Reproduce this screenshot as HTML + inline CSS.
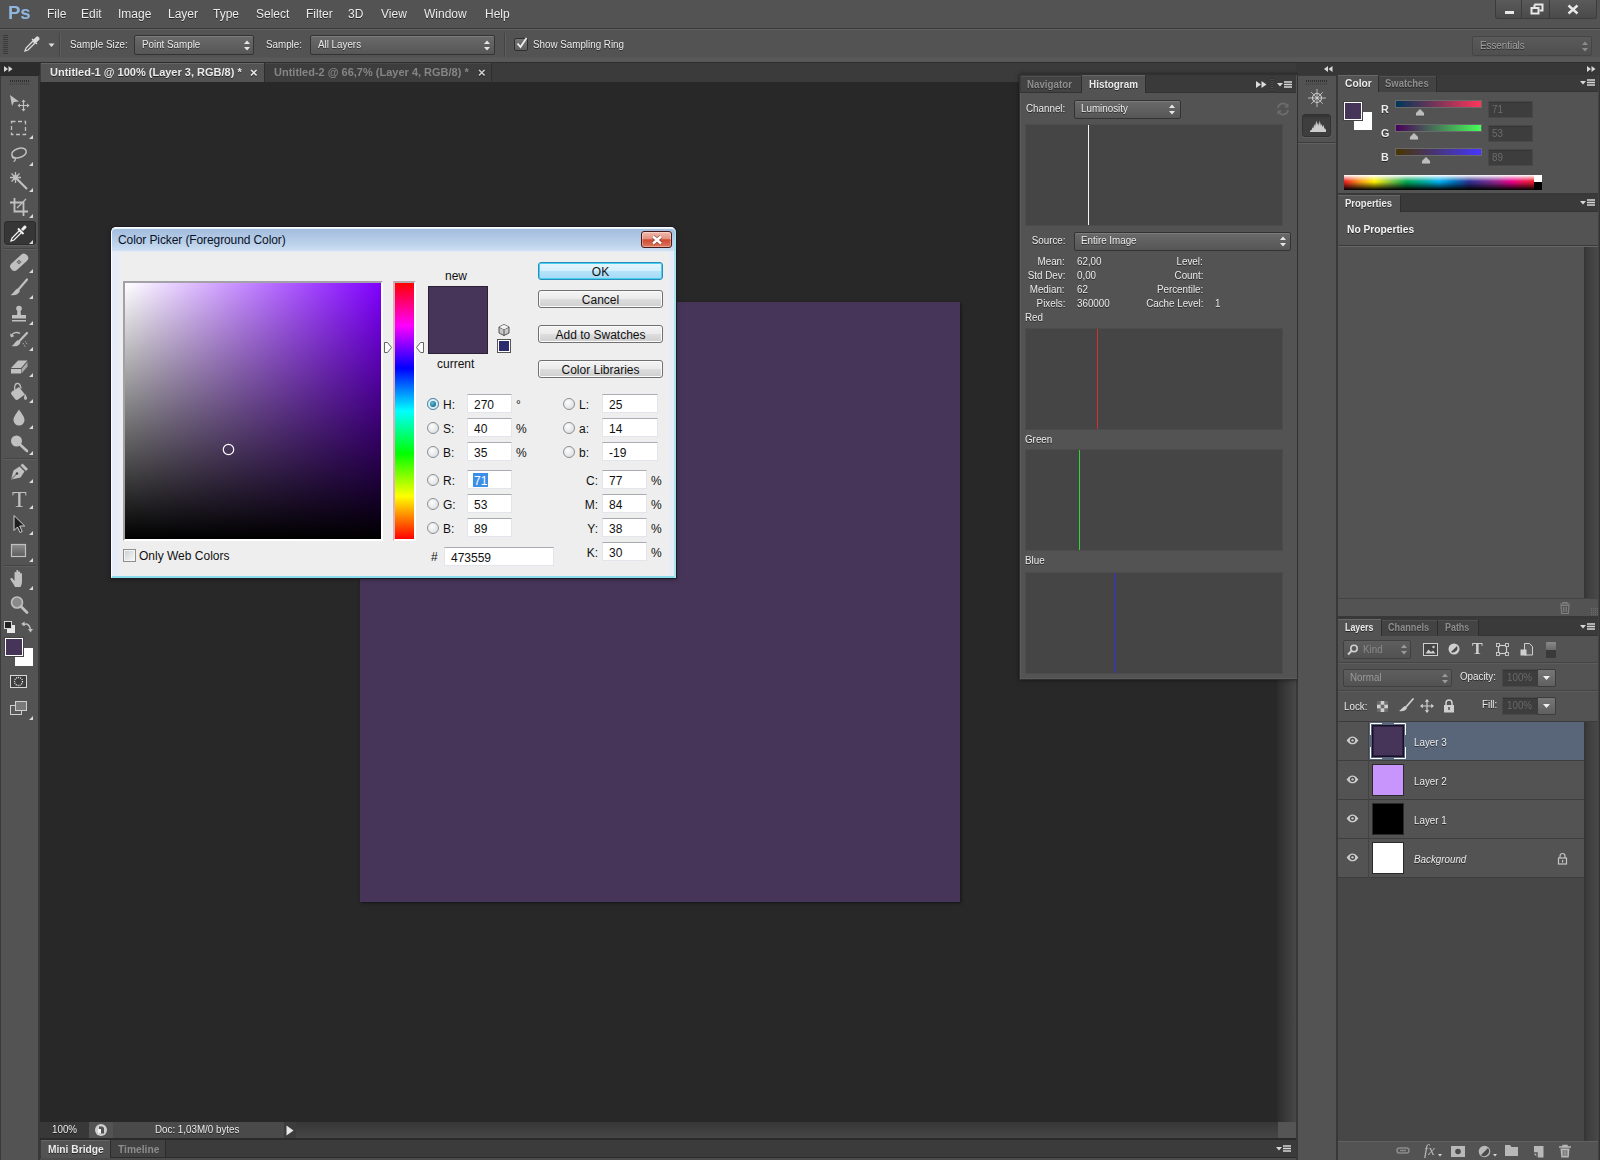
<!DOCTYPE html>
<html>
<head>
<meta charset="utf-8">
<title>Photoshop</title>
<style>
html,body{margin:0;padding:0;}
body{width:1600px;height:1160px;overflow:hidden;position:relative;background:#282828;font-family:"Liberation Sans","DejaVu Sans",sans-serif;font-size:11px;color:#ebebeb;}
.a{position:absolute;box-sizing:border-box;}
.t{position:absolute;white-space:nowrap;opacity:.999;font-size:10px;line-height:14px;text-shadow:0 1px 0 rgba(0,0,0,.55);transform:scaleX(.98);transform-origin:0 0;}
.w{transform:none;}
.b{font-weight:bold;transform:scaleX(1.023);}
.dt{font-weight:bold;transform:scaleX(1.1);}
.r{transform-origin:100% 0;text-align:right;}
.dim{color:#9a9a9a;}
svg{position:absolute;overflow:visible;}
.mb{top:7px;font-size:12px;color:#ececec;transform:none;}
.dd{background:linear-gradient(#6a6a6a,#565656);border:1px solid #333;border-radius:2px;box-shadow:inset 0 1px 0 rgba(255,255,255,.12);}
.hb{width:258px;height:102px;background:#454545;border:1px solid #4c4c4c;}
.tf{background:#3d3d3d;border:1px solid #484848;box-shadow:inset 0 1px 0 #353535;}
.dd2{background:linear-gradient(#5e5e5e,#525252);border:1px solid #404040;border-radius:2px;}
.sep{height:2px;background:#444;border-bottom:1px solid #5e5e5e;}
.d{position:absolute;white-space:nowrap;font-size:12px;line-height:14px;color:#111;}
/* SECTION-CSS */
</style>
</head>
<body>
<!-- MENUBAR -->
<div class="a" style="left:0;top:0;width:1600px;height:28px;background:#535353;"></div>
<div class="a" style="left:0;top:28px;width:1600px;height:1px;background:#3a3a3a;"></div>
<div class="t" style="left:8px;top:2px;font-size:19px;line-height:22px;font-weight:bold;color:#8fb6dd;letter-spacing:-0.3px;text-shadow:none;">Ps</div>
<div class="t mb" style="left:47px;">File</div>
<div class="t mb" style="left:81px;">Edit</div>
<div class="t mb" style="left:118px;">Image</div>
<div class="t mb" style="left:168px;">Layer</div>
<div class="t mb" style="left:213px;">Type</div>
<div class="t mb" style="left:256px;">Select</div>
<div class="t mb" style="left:306px;">Filter</div>
<div class="t mb" style="left:348px;">3D</div>
<div class="t mb" style="left:381px;">View</div>
<div class="t mb" style="left:424px;">Window</div>
<div class="t mb" style="left:485px;">Help</div>
<div class="a" style="left:1495px;top:0;width:102px;height:19px;background:linear-gradient(#5a5a5a,#4a4a4a);border:1px solid #3c3c3c;border-top:none;border-radius:0 0 3px 3px;"></div>
<div class="a" style="left:1521px;top:0;width:1px;height:18px;background:#3c3c3c;"></div>
<div class="a" style="left:1549px;top:0;width:1px;height:18px;background:#3c3c3c;"></div>
<div class="a" style="left:1505px;top:11px;width:9px;height:3px;background:#e8e8e8;"></div>
<svg style="left:1530px;top:3px;" width="14" height="12"><path d="M4.5 1.5h8v6h-3M4.5 1.5v2.5" fill="none" stroke="#e8e8e8" stroke-width="2"/><rect x="1.5" y="5" width="7" height="5.5" fill="none" stroke="#e8e8e8" stroke-width="2"/></svg>
<svg style="left:1567px;top:4px;" width="12" height="11"><path d="M1.5 1.5l9 8M10.5 1.5l-9 8" stroke="#e8e8e8" stroke-width="2.4" fill="none"/></svg>
<!-- OPTIONS -->
<div class="a" style="left:0;top:29px;width:1600px;height:33px;background:linear-gradient(#535353 0,#535353 27px,#5a5a5a 28px,#575757 33px);border-top:1px solid #626262;"></div>
<div class="a" style="left:0;top:62px;width:1600px;height:1px;background:#2e2e2e;"></div>
<div class="a" style="left:3px;top:35px;width:5px;height:20px;background:repeating-linear-gradient(#3a3a3a 0 1px,#535353 1px 2px);"></div>
<svg style="left:22px;top:34px;" width="20" height="20" viewBox="0 0 20 20"><path d="M3 17l1-3 7-7 2 2-7 7z" fill="none" stroke="#dcdcdc" stroke-width="1.3"/><path d="M10 5l5 5 M11.5 6.5l3-3.2c1-1 3.2 1.2 2.2 2.2l-3.2 3z" fill="#dcdcdc" stroke="#dcdcdc" stroke-width="1.2"/></svg>
<svg style="left:48px;top:43px;" width="8" height="5"><path d="M0.5 0.5h6l-3 3.5z" fill="#e0e0e0"/></svg>
<div class="a" style="left:59px;top:33px;width:1px;height:24px;background:#444;border-right:1px solid #5e5e5e;width:2px;"></div>
<div class="t" style="left:70px;top:38px;">Sample Size:</div>
<div class="a dd" style="left:134px;top:35px;width:120px;height:20px;"></div>
<div class="t" style="left:142px;top:38px;">Point Sample</div>
<svg style="left:243px;top:40px;" width="8" height="11"><path d="M1 4l3-3.5 3 3.5zM1 7l3 3.5 3-3.5z" fill="#e6e6e6"/></svg>
<div class="t" style="left:266px;top:38px;">Sample:</div>
<div class="a dd" style="left:310px;top:35px;width:185px;height:20px;"></div>
<div class="t" style="left:318px;top:38px;">All Layers</div>
<svg style="left:483px;top:40px;" width="8" height="11"><path d="M1 4l3-3.5 3 3.5zM1 7l3 3.5 3-3.5z" fill="#e6e6e6"/></svg>
<div class="a" style="left:504px;top:33px;width:2px;height:24px;background:#444;border-right:1px solid #5e5e5e;"></div>
<div class="a" style="left:514px;top:38px;width:14px;height:13px;background:linear-gradient(#747474,#606060);border:1px solid #2e2e2e;border-radius:2px;"></div>
<svg style="left:515px;top:36px;" width="14" height="14"><path d="M2.5 7.5l3 3.5 6-9" fill="none" stroke="#f0f0f0" stroke-width="1.8"/></svg>
<div class="t" style="left:533px;top:38px;">Show Sampling Ring</div>
<div class="a" style="left:1472px;top:36px;width:120px;height:20px;background:linear-gradient(#5a5a5a,#4f4f4f);border:1px solid #454545;border-radius:2px;"></div>
<div class="t dim" style="left:1480px;top:39px;color:#a0a0a0;">Essentials</div>
<svg style="left:1581px;top:41px;" width="8" height="11"><path d="M1 4l3-3.5 3 3.5zM1 7l3 3.5 3-3.5z" fill="#8c8c8c"/></svg>
<!-- TABS -->
<div class="a" style="left:0;top:63px;width:1600px;height:19px;background:#3b3b3b;"></div>
<div class="a" style="left:0;top:63px;width:40px;height:12px;background:#2c2c2c;"></div>
<svg style="left:4px;top:66px;" width="9" height="6"><path d="M0 0l4 3-4 3zM4.5 0l4 3-4 3z" fill="#d8d8d8"/></svg>
<div class="a" style="left:41px;top:63px;width:223px;height:19px;background:#535353;border-top:1px solid #666;"></div>
<div class="a" style="left:264px;top:63px;width:1px;height:19px;background:#2f2f2f;"></div>
<div class="a" style="left:265px;top:63px;width:226px;height:19px;background:#3d3d3d;border-top:1px solid #484848;"></div>
<div class="a" style="left:491px;top:63px;width:1px;height:19px;background:#2f2f2f;"></div>
<div class="a" style="left:40px;top:82px;width:224px;height:5px;background:#2e2e2e;"></div>
<div class="t dt" style="left:50px;top:66px;">Untitled-1 @ 100% (Layer 3, RGB/8) *</div>
<div class="t w" style="left:250px;top:65px;font-weight:bold;font-size:13px;line-height:16px;">×</div>
<div class="t dt" style="left:274px;top:66px;color:#858585;text-shadow:none;">Untitled-2 @ 66,7% (Layer 4, RGB/8) *</div>
<div class="t w" style="left:478px;top:65px;font-weight:bold;font-size:13px;line-height:16px;color:#d0d0d0;">×</div>
<!-- TOOLS -->
<div class="a" style="left:0;top:75px;width:40px;height:1085px;background:#535353;border-left:1px solid #3a3a3a;border-right:2px solid #383838;"></div>
<div class="a" style="left:0;top:75px;width:38px;height:1px;background:#2a2a2a;"></div>
<div class="a" style="left:10px;top:80px;width:20px;height:2px;background:repeating-linear-gradient(90deg,#2e2e2e 0 1px,#535353 1px 2px);"></div>
<div class="a" style="left:10px;top:83px;width:20px;height:2px;background:repeating-linear-gradient(90deg,#444 0 1px,#535353 1px 2px);"></div>
<div class="a" style="left:4px;top:221px;width:32px;height:24px;background:#363636;border-radius:3px;border:1px solid #2c2c2c;box-shadow:0 1px 0 #626262;"></div>
<div class="a" style="left:4px;top:248px;width:32px;height:1px;background:#444;border-bottom:1px solid #5e5e5e;height:2px;"></div>
<div class="a" style="left:4px;top:458px;width:32px;height:1px;background:#444;border-bottom:1px solid #5e5e5e;height:2px;"></div>
<div class="a" style="left:4px;top:565px;width:32px;height:1px;background:#444;border-bottom:1px solid #5e5e5e;height:2px;"></div>
<svg style="left:9px;top:93px;" width="20" height="20" viewBox="0 0 20 20"><path d="M1 2l9 6.5-5 .5-2 4z" fill="#c0c0c0"/><path d="M14.5 8v9M10 12.500h9" stroke="#c0c0c0" stroke-width="1.2" fill="none"/><path d="M14.5 6.500l2 2.500h-4zM14.5 18.500l2-2.500h-4zM8.5 12.500l2.500-2v4zM20.5 12.500l-2.500-2v4z" fill="#c0c0c0"/></svg>
<svg style="left:9px;top:118px;" width="20" height="20" viewBox="0 0 20 20"><rect x="2.5" y="3.5" width="14" height="13" fill="none" stroke="#c0c0c0" stroke-width="1.3" stroke-dasharray="4 2.5"/></svg>
<svg style="left:29px;top:135px;" width="4" height="4"><path d="M4 0v4h-4z" fill="#dadada"/></svg>
<svg style="left:9px;top:145px;" width="20" height="20" viewBox="0 0 20 20"><ellipse cx="10" cy="8" rx="7.5" ry="4.5" transform="rotate(-18 10 8)" fill="none" stroke="#c0c0c0" stroke-width="1.5"/><path d="M3.5 10.500c-1 2 1 3 2.5 2.5 1 1 0 3-1.5 3.5" fill="none" stroke="#c0c0c0" stroke-width="1.3"/></svg>
<svg style="left:29px;top:162px;" width="4" height="4"><path d="M4 0v4h-4z" fill="#dadada"/></svg>
<svg style="left:9px;top:171px;" width="20" height="20" viewBox="0 0 20 20"><path d="M8 8l10 10" stroke="#c0c0c0" stroke-width="2.2"/><path d="M6.5 1v11M1 6.500h11M2.5 2.500l8 8M10.5 2.500l-8 8" stroke="#c0c0c0" stroke-width="1.3"/><circle cx="6.5" cy="6.5" r="2.5" fill="#c0c0c0"/></svg>
<svg style="left:29px;top:188px;" width="4" height="4"><path d="M4 0v4h-4z" fill="#dadada"/></svg>
<svg style="left:9px;top:197px;" width="20" height="20" viewBox="0 0 20 20"><path d="M5.5 1v13.500h13.500M1 5.500h13.500v13.5" fill="none" stroke="#c0c0c0" stroke-width="1.8"/><path d="M17 2l-9 9" stroke="#c0c0c0" stroke-width="1.2"/></svg>
<svg style="left:29px;top:214px;" width="4" height="4"><path d="M4 0v4h-4z" fill="#dadada"/></svg>
<svg style="left:9px;top:223px;" width="20" height="20" viewBox="0 0 20 20"><path d="M2 18l1-3 7.500-7.5 2 2-7.5 7.500z" fill="none" stroke="#f0f0f0" stroke-width="1.3"/><path d="M9 5.500l5.5 5.5" stroke="#f0f0f0" stroke-width="2"/><path d="M12 6l3-3.200c1.200-1.200 3.400 1 2.200 2.200l-3.200 3z" fill="#f0f0f0"/></svg>
<svg style="left:29px;top:240px;" width="4" height="4"><path d="M4 0v4h-4z" fill="#dadada"/></svg>
<svg style="left:9px;top:252px;" width="20" height="20" viewBox="0 0 20 20"><rect x="-0.5" y="6" width="21" height="8.5" rx="4" transform="rotate(-42 10 10)" fill="#c0c0c0"/><g fill="#535353"><circle cx="8.5" cy="10" r=".8"/><circle cx="10" cy="8.5" r=".8"/><circle cx="11.5" cy="10" r=".8"/><circle cx="10" cy="11.5" r=".8"/><circle cx="10" cy="10" r=".7"/></g></svg>
<svg style="left:29px;top:269px;" width="4" height="4"><path d="M4 0v4h-4z" fill="#dadada"/></svg>
<svg style="left:9px;top:278px;" width="20" height="20" viewBox="0 0 20 20"><path d="M18 1.500l-8.5 10" stroke="#c0c0c0" stroke-width="2.2" stroke-linecap="round"/><path d="M8.5 10.500l2.5 2.500c-1.5 3.500-5.5 5-9.5 4 2.500-1 3.500-4.5 7-6.500z" fill="#c0c0c0"/></svg>
<svg style="left:29px;top:295px;" width="4" height="4"><path d="M4 0v4h-4z" fill="#dadada"/></svg>
<svg style="left:9px;top:304px;" width="20" height="20" viewBox="0 0 20 20"><circle cx="10" cy="4.5" r="2.8" fill="#c0c0c0"/><path d="M8.5 6h3l.5 5.500h-4z" fill="#c0c0c0"/><rect x="3" y="11" width="14" height="3.5" fill="#c0c0c0"/><rect x="3" y="16" width="14" height="1.5" fill="#c0c0c0"/></svg>
<svg style="left:29px;top:321px;" width="4" height="4"><path d="M4 0v4h-4z" fill="#dadada"/></svg>
<svg style="left:9px;top:330px;" width="20" height="20" viewBox="0 0 20 20"><path d="M18 3l-8 8.5" stroke="#c0c0c0" stroke-width="2.2" stroke-linecap="round"/><path d="M9 10l2.5 2.500c-1.5 3.500-5 4.500-9 3.5 2.500-1 3-4 6.500-6z" fill="#c0c0c0"/><path d="M2 6c2-3.5 6-4.5 9-2.5" fill="none" stroke="#c0c0c0" stroke-width="1.400"/><path d="M1 3.500l1 4 3.500-1.500z" fill="#c0c0c0"/><path d="M14 13l2.5 4M16.5 11.500l2 3.5" stroke="#c0c0c0" stroke-width="1" stroke-dasharray="1 1"/></svg>
<svg style="left:29px;top:347px;" width="4" height="4"><path d="M4 0v4h-4z" fill="#dadada"/></svg>
<svg style="left:9px;top:356px;" width="20" height="20" viewBox="0 0 20 20"><path d="M2 12l7-7.500h9.500l-6.5 7.500z" fill="#c0c0c0"/><path d="M2 13h10v4.500h-10z" fill="#c0c0c0"/><path d="M12.5 13l6-7v4.500l-6 7z" fill="#a8a8a8"/></svg>
<svg style="left:29px;top:373px;" width="4" height="4"><path d="M4 0v4h-4z" fill="#dadada"/></svg>
<svg style="left:9px;top:382px;" width="20" height="20" viewBox="0 0 20 20"><path d="M3 9.500l7-4.5 6 7.500-7 5c-1 .7-2.200.5-3-.5l-3.500-4.500c-.7-1-.5-2.200.5-3z" fill="#c0c0c0"/><path d="M6 8c-1-3.5 0-6 2-6.500s3.5 1.5 4 5" fill="none" stroke="#c0c0c0" stroke-width="1.3"/><path d="M16 12c1 1.5 2 3 2 4.200a1.5 1.5 0 0 1-3 0c0-1.200.5-2.700 1-4.200z" fill="#c0c0c0"/></svg>
<svg style="left:29px;top:399px;" width="4" height="4"><path d="M4 0v4h-4z" fill="#dadada"/></svg>
<svg style="left:9px;top:408px;" width="20" height="20" viewBox="0 0 20 20"><path d="M10 1.500c2.5 4 5.5 7 5.5 10.500a5.5 5.5 0 0 1-11 0c0-3.5 3-6.5 5.500-10.500z" fill="#c0c0c0"/></svg>
<svg style="left:29px;top:425px;" width="4" height="4"><path d="M4 0v4h-4z" fill="#dadada"/></svg>
<svg style="left:9px;top:434px;" width="20" height="20" viewBox="0 0 20 20"><circle cx="7.5" cy="7" r="5.5" fill="#c0c0c0"/><path d="M11 10.500l7 6.5" stroke="#c0c0c0" stroke-width="2.600" stroke-linecap="round"/></svg>
<svg style="left:29px;top:451px;" width="4" height="4"><path d="M4 0v4h-4z" fill="#dadada"/></svg>
<svg style="left:9px;top:462px;" width="20" height="20" viewBox="0 0 20 20"><path d="M2 17.500l2.500-9 6-4 5 5-4 6z" fill="#c0c0c0"/><path d="M11.5 3.500l2-2 5.5 5.500-2 2z" fill="#c0c0c0"/><circle cx="8" cy="11.5" r="1.3" fill="#444"/><path d="M2.5 17l5-5" stroke="#444" stroke-width=".9"/></svg>
<svg style="left:29px;top:479px;" width="4" height="4"><path d="M4 0v4h-4z" fill="#dadada"/></svg>
<div class="t w" style="left:12px;top:487px;font-family:'Liberation Serif',serif;font-size:24px;line-height:24px;color:#c0c0c0;text-shadow:none;">T</div>
<svg style="left:29px;top:505px;" width="4" height="4"><path d="M4 0v4h-4z" fill="#dadada"/></svg>
<svg style="left:9px;top:514px;" width="20" height="20" viewBox="0 0 20 20"><path d="M5 1.500v15l3.500-3.5 2.5 5.5 2.200-1-2.500-5.500h5z" fill="#1e1e1e" stroke="#d0d0d0" stroke-width="1"/></svg>
<svg style="left:29px;top:531px;" width="4" height="4"><path d="M4 0v4h-4z" fill="#dadada"/></svg>
<svg style="left:9px;top:541px;" width="20" height="20" viewBox="0 0 20 20"><defs><linearGradient id="rg" x1="0" y1="0" x2="0" y2="1"><stop offset="0" stop-color="#8c8c8c"/><stop offset="1" stop-color="#5c5c5c"/></linearGradient></defs><rect x="2.5" y="3.5" width="14" height="12" fill="url(#rg)" stroke="#c0c0c0" stroke-width="1.2"/></svg>
<svg style="left:29px;top:558px;" width="4" height="4"><path d="M4 0v4h-4z" fill="#dadada"/></svg>
<svg style="left:9px;top:569px;" width="20" height="20" viewBox="0 0 20 20"><path d="M6 18c-1-2.500-3-5-4.500-7.500-.5-1 1-2 2-1l2 2.500v-8c0-1.300 1.800-1.300 1.800 0v-2c0-1.400 2-1.400 2 0v1.500c0-1.300 1.900-1.300 1.900 0v1.500c0-1.200 1.800-1.200 1.800 0v7.500c0 2-.5 3.500-1.5 5.500z" fill="#c0c0c0"/></svg>
<svg style="left:29px;top:586px;" width="4" height="4"><path d="M4 0v4h-4z" fill="#dadada"/></svg>
<svg style="left:9px;top:595px;" width="20" height="20" viewBox="0 0 20 20"><circle cx="8" cy="7.5" r="5.5" fill="#8a8a8a" stroke="#c0c0c0" stroke-width="1.600"/><path d="M12 11.500l6 6" stroke="#c0c0c0" stroke-width="2.8" stroke-linecap="round"/></svg>
<svg style="left:4px;top:621px;" width="13" height="13"><rect x="3.5" y="4.5" width="7" height="7" fill="#e8e8e8" stroke="#e8e8e8"/><rect x=".5" y=".5" width="7" height="7" fill="#222" stroke="#d8d8d8"/></svg>
<svg style="left:20px;top:620px;" width="14" height="14"><path d="M3 5.500c3-3 6-1.5 7.5 3.5" fill="none" stroke="#c0c0c0" stroke-width="1.400"/><path d="M1 4l3.500-2.500.5 4.500z" fill="#c0c0c0"/><path d="M8 9h5l-2.5 3.500z" fill="#c0c0c0"/></svg>
<div class="a" style="left:15px;top:648px;width:18px;height:18px;background:#fff;"></div>
<div class="a" style="left:5px;top:638px;width:18px;height:18px;background:#473559;border:1px solid #fff;outline:1px solid #444;"></div>
<svg style="left:10px;top:675px;" width="18" height="14"><rect x=".5" y=".5" width="16" height="12" fill="#3e3e3e" stroke="#d8d8d8"/><circle cx="8.5" cy="6.5" r="4" fill="none" stroke="#f0f0f0" stroke-width="1.3" stroke-dasharray="1 1"/></svg>
<svg style="left:10px;top:701px;" width="18" height="17"><rect x=".5" y="4.5" width="11" height="9" fill="#5a5a5a" stroke="#d0d0d0"/><rect x="5.5" y=".5" width="11" height="9" fill="#7a7a7a" stroke="#d0d0d0"/></svg>
<svg style="left:29px;top:716px;" width="4" height="4"><path d="M4 0v4h-4z" fill="#dadada"/></svg>
<!-- CANVAS -->
<div class="a" style="left:40px;top:82px;width:1257px;height:1040px;background:#282828;"></div>
<div class="a" style="left:360px;top:302px;width:600px;height:600px;background:#473559;box-shadow:1px 1px 3px rgba(0,0,0,.5);"></div>
<div class="a" style="left:1277px;top:82px;width:19px;height:1040px;background:linear-gradient(90deg,#2c2c2c,#484848);"></div>
<div class="a" style="left:1296px;top:63px;width:2px;height:1097px;background:#383838;"></div>
<!-- STATUS -->
<div class="a" style="left:40px;top:1122px;width:1256px;height:16px;background:linear-gradient(#373737,#464646);"></div>
<div class="a" style="left:1278px;top:1122px;width:18px;height:16px;background:#555;"></div>
<div class="a" style="left:40px;top:1122px;width:49px;height:16px;background:#383838;"></div>
<div class="a" style="left:89px;top:1122px;width:24px;height:16px;background:#535353;"></div>
<div class="a" style="left:113px;top:1122px;width:171px;height:16px;background:#4a4a4a;"></div>
<div class="a" style="left:284px;top:1122px;width:12px;height:16px;background:#3c3c3c;"></div>
<div class="t" style="left:52px;top:1123px;">100%</div>
<svg style="left:94px;top:1123px;" width="14" height="14"><circle cx="7" cy="7" r="6" fill="#cfcfcf"/><path d="M5 3.500h3.500l1.500 1.500v5.500h-5z" fill="#535353"/><path d="M4 6h3v4.500h-3z" fill="#f4f4f4"/></svg>
<div class="t" style="left:155px;top:1123px;">Doc: 1,03M/0 bytes</div>
<svg style="left:286px;top:1125px;" width="8" height="11"><path d="M.5 .5l7 5-7 5z" fill="#e8e8e8"/></svg>
<div class="a" style="left:40px;top:1138px;width:1256px;height:2px;background:#2a2a2a;"></div>
<div class="a" style="left:40px;top:1140px;width:1256px;height:17px;background:#3b3b3b;"></div>
<div class="a" style="left:40px;top:1157px;width:1256px;height:1px;background:#2c2c2c;"></div>
<div class="a" style="left:40px;top:1158px;width:1256px;height:2px;background:#4c4c4c;"></div>
<div class="a" style="left:41px;top:1140px;width:69px;height:18px;background:#535353;border-top:1px solid #646464;"></div>
<div class="a" style="left:110px;top:1140px;width:1px;height:17px;background:#2c2c2c;"></div>
<div class="a" style="left:111px;top:1140px;width:54px;height:17px;background:#424242;"></div>
<div class="a" style="left:165px;top:1140px;width:1px;height:17px;background:#2c2c2c;"></div>
<div class="t b" style="left:48px;top:1143px;">Mini Bridge</div>
<div class="t b" style="left:118px;top:1143px;color:#8c8c8c;text-shadow:none;">Timeline</div>
<svg style="left:1276px;top:1145px;" width="16" height="9"><path d="M0 2h6l-3 3.500z" fill="#d8d8d8"/><path d="M7 1h8M7 3.500h8M7 6h8" stroke="#d8d8d8" stroke-width="1.300"/></svg>
<!-- HISTOGRAM -->
<div class="a" style="left:1019px;top:74px;width:279px;height:606px;background:#535353;border:1px solid #303030;box-shadow:0 0 4px rgba(0,0,0,.5),inset 1px 0 0 #5c5c5c,inset 0 -1px 0 #5c5c5c;"></div>
<div class="a" style="left:1020px;top:75px;width:276px;height:18px;background:#3a3a3a;border-bottom:1px solid #333;"></div>
<div class="a" style="left:1021px;top:76px;width:60px;height:16px;background:#434343;border-top:1px solid #505050;"></div>
<div class="a" style="left:1081px;top:76px;width:1px;height:17px;background:#2e2e2e;"></div>
<div class="a" style="left:1082px;top:75px;width:63px;height:19px;background:#535353;border-top:1px solid #676767;"></div>
<div class="a" style="left:1145px;top:76px;width:1px;height:17px;background:#2e2e2e;"></div>
<div class="t b" style="left:1027px;top:78px;color:#8e8e8e;text-shadow:0 1px 0 rgba(0,0,0,.4);transform:scaleX(0.974);">Navigator</div>
<div class="t b" style="left:1089px;top:78px;transform:scaleX(0.990);">Histogram</div>
<svg style="left:1256px;top:81px;" width="11" height="8"><path d="M0 0l5 3.500-5 3.500zM5.500 0l5 3.500-5 3.500z" fill="#dcdcdc"/></svg>
<div class="a" style="left:1271px;top:78px;width:2px;height:13px;background:repeating-linear-gradient(#2c2c2c 0 1px,#535353 1px 2px);"></div>
<svg style="left:1277px;top:81px;" width="16" height="9"><path d="M0 2h6l-3 3.500z" fill="#d8d8d8"/><path d="M7 1h8M7 3.500h8M7 6h8" stroke="#d8d8d8" stroke-width="1.300"/></svg>
<div class="t" style="left:1026px;top:102px;">Channel:</div>
<div class="a dd" style="left:1074px;top:100px;width:107px;height:19px;"></div>
<div class="t" style="left:1081px;top:102px;">Luminosity</div>
<svg style="left:1168px;top:104px;" width="8" height="11"><path d="M1 4l3-3.500 3 3.500zM1 7l3 3.500 3-3.500z" fill="#e6e6e6"/></svg>
<svg style="left:1276px;top:102px;" width="14" height="14"><path d="M2 6a5 5 0 0 1 9-2.500M12 8a5 5 0 0 1-9 2.500" fill="none" stroke="#6c6c6c" stroke-width="1.800"/><path d="M12.500 1v4.500h-4.500zM1.500 13v-4.500h4.500z" fill="#6c6c6c"/></svg>
<div class="a hb" style="left:1025px;top:124px;"></div>
<div class="a" style="left:1088px;top:125px;width:1px;height:100px;background:#f4f4f4;"></div>
<div class="t r" style="right:535px;top:234px;">Source:</div>
<div class="a dd" style="left:1074px;top:232px;width:217px;height:19px;"></div>
<div class="t" style="left:1081px;top:234px;">Entire Image</div>
<svg style="left:1279px;top:236px;" width="8" height="11"><path d="M1 4l3-3.500 3 3.500zM1 7l3 3.500 3-3.500z" fill="#e6e6e6"/></svg>
<div class="t r" style="right:535px;top:255px;">Mean:</div><div class="t" style="left:1077px;top:255px;">62,00</div>
<div class="t r" style="right:535px;top:269px;">Std Dev:</div><div class="t" style="left:1077px;top:269px;">0,00</div>
<div class="t r" style="right:535px;top:283px;">Median:</div><div class="t" style="left:1077px;top:283px;">62</div>
<div class="t r" style="right:535px;top:297px;">Pixels:</div><div class="t" style="left:1077px;top:297px;">360000</div>
<div class="t r" style="right:397px;top:255px;">Level:</div>
<div class="t r" style="right:397px;top:269px;">Count:</div>
<div class="t r" style="right:397px;top:283px;">Percentile:</div>
<div class="t r" style="right:397px;top:297px;">Cache Level:</div><div class="t" style="left:1215px;top:297px;">1</div>
<div class="t" style="left:1025px;top:311px;">Red</div>
<div class="a hb" style="left:1025px;top:328px;"></div>
<div class="a" style="left:1097px;top:329px;width:1px;height:100px;background:#d23232;"></div>
<div class="t" style="left:1025px;top:433px;">Green</div>
<div class="a hb" style="left:1025px;top:449px;"></div>
<div class="a" style="left:1079px;top:450px;width:1px;height:100px;background:#35d335;"></div>
<div class="t" style="left:1025px;top:554px;">Blue</div>
<div class="a hb" style="left:1025px;top:572px;"></div>
<div class="a" style="left:1115px;top:573px;width:1px;height:100px;background:#3232e0;"></div>
<!-- STRIP -->
<div class="a" style="left:1298px;top:63px;width:302px;height:12px;background:#373737;"></div>
<div class="a" style="left:1298px;top:75px;width:38px;height:1085px;background:#535353;border-top:1px solid #3a3a3a;"></div>
<div class="a" style="left:1336px;top:75px;width:2px;height:1085px;background:#383838;"></div>
<svg style="left:1324px;top:66px;" width="9" height="6"><path d="M4 0l-4 3 4 3zM8.500 0l-4 3 4 3z" fill="#d8d8d8"/></svg>
<svg style="left:1587px;top:66px;" width="9" height="6"><path d="M0 0l4 3-4 3zM4.500 0l4 3-4 3z" fill="#d8d8d8"/></svg>
<div class="a" style="left:1306px;top:80px;width:22px;height:2px;background:repeating-linear-gradient(90deg,#2e2e2e 0 1px,#535353 1px 2px);"></div>
<div class="a" style="left:1306px;top:83px;width:22px;height:2px;background:repeating-linear-gradient(90deg,#444 0 1px,#535353 1px 2px);"></div>
<svg style="left:1308px;top:89px;" width="18" height="18" viewBox="0 0 20 20"><circle cx="10" cy="10" r="5" fill="none" stroke="#cfcfcf" stroke-width="1.300"/><path d="M10 0v20M0 10h20M3.500 3.500l13 13M16.500 3.500l-13 13" stroke="#cfcfcf" stroke-width=".9"/><circle cx="10" cy="10" r="1.500" fill="#cfcfcf"/></svg>
<div class="a" style="left:1302px;top:114px;width:29px;height:23px;background:linear-gradient(#333 0,#3e3e3e 4px);border-radius:3px;border:1px solid #323232;box-shadow:0 1px 0 #5e5e5e;"></div>
<svg style="left:1310px;top:120px;" width="16" height="13" viewBox="0 0 19 15"><path d="M0 14v-1.500l2-1 1-3 1 1 1-5 1 3 1.500-7 1 5 1-3 1 4 1-6 1.500 6 1-2 1 4 1-3 1 4 2 1.500v3z" fill="#cdcdcd"/></svg>
<div class="a" style="left:1298px;top:142px;width:38px;height:2px;background:#3c3c3c;border-bottom:1px solid #606060;"></div>
<!-- COLORPANEL -->
<div class="a" style="left:1338px;top:75px;width:262px;height:120px;background:#535353;"></div>
<div class="a" style="left:1338px;top:75px;width:262px;height:17px;background:#3a3a3a;border-bottom:1px solid #333;"></div>
<div class="a" style="left:1338px;top:75px;width:40px;height:18px;background:#535353;border-top:1px solid #676767;"></div>
<div class="a" style="left:1378px;top:76px;width:1px;height:16px;background:#2e2e2e;"></div>
<div class="a" style="left:1379px;top:76px;width:57px;height:16px;background:#434343;border-top:1px solid #505050;"></div>
<div class="a" style="left:1436px;top:76px;width:1px;height:16px;background:#2e2e2e;"></div>
<div class="t b" style="left:1345px;top:77px;">Color</div>
<div class="t b" style="left:1385px;top:77px;color:#8e8e8e;text-shadow:0 1px 0 rgba(0,0,0,.4);transform:scaleX(0.946);">Swatches</div>
<svg style="left:1580px;top:79px;" width="16" height="9"><path d="M0 2h6l-3 3.500z" fill="#d8d8d8"/><path d="M7 1h8M7 3.500h8M7 6h8" stroke="#d8d8d8" stroke-width="1.300"/></svg>
<div class="a" style="left:1354px;top:112px;width:18px;height:18px;background:#fff;"></div>
<div class="a" style="left:1344px;top:102px;width:18px;height:18px;background:#473559;border:1px solid #fff;outline:1px solid #444;"></div>
<div class="t b" style="left:1381px;top:102px;font-size:10.5px;">R</div>
<div class="t b" style="left:1381px;top:126px;font-size:10.5px;">G</div>
<div class="t b" style="left:1381px;top:150px;font-size:10.5px;">B</div>
<div class="a" style="left:1396px;top:101px;width:85px;height:6px;background:linear-gradient(90deg,#003559,#ff3559);box-shadow:0 0 0 1px rgba(150,150,150,.35);"></div>
<div class="a" style="left:1396px;top:125px;width:85px;height:6px;background:linear-gradient(90deg,#470059,#47ff59);box-shadow:0 0 0 1px rgba(150,150,150,.35);"></div>
<div class="a" style="left:1396px;top:149px;width:85px;height:6px;background:linear-gradient(90deg,#473500,#4735ff);box-shadow:0 0 0 1px rgba(150,150,150,.35);"></div>
<svg style="left:1415px;top:108px;" width="10" height="9"><path d="M5 .5l4.500 4.500v3h-9v-3z" fill="#bdbdbd" stroke="#4a4a4a" stroke-width=".8"/></svg>
<svg style="left:1409px;top:132px;" width="10" height="9"><path d="M5 .5l4.500 4.500v3h-9v-3z" fill="#bdbdbd" stroke="#4a4a4a" stroke-width=".8"/></svg>
<svg style="left:1421px;top:156px;" width="10" height="9"><path d="M5 .5l4.500 4.500v3h-9v-3z" fill="#bdbdbd" stroke="#4a4a4a" stroke-width=".8"/></svg>
<div class="a tf" style="left:1488px;top:101px;width:45px;height:17px;"></div>
<div class="a tf" style="left:1488px;top:125px;width:45px;height:17px;"></div>
<div class="a tf" style="left:1488px;top:149px;width:45px;height:17px;"></div>
<div class="t" style="left:1492px;top:103px;color:#6c6c6c;text-shadow:none;">71</div>
<div class="t" style="left:1492px;top:127px;color:#6c6c6c;text-shadow:none;">53</div>
<div class="t" style="left:1492px;top:151px;color:#6c6c6c;text-shadow:none;">89</div>
<div class="a" style="left:1344px;top:175px;width:190px;height:15px;background:linear-gradient(90deg,#ee1c24 0%,#f7941d 8%,#fff200 16%,#8dc63f 24%,#00a651 33%,#00a99d 42%,#00aeef 50%,#0072bc 58%,#2e3192 66%,#662d91 74%,#92278f 80%,#ec008c 88%,#ed145b 94%,#ee1c24 100%);"></div>
<div class="a" style="left:1344px;top:175px;width:190px;height:15px;background:linear-gradient(#fff 0%,rgba(255,255,255,0) 42%,rgba(0,0,0,0) 46%,#000 100%);"></div>
<div class="a" style="left:1534px;top:175px;width:8px;height:7px;background:#fff;"></div>
<div class="a" style="left:1534px;top:182px;width:8px;height:8px;background:#000;"></div>
<!-- PROPERTIES -->
<div class="a" style="left:1338px;top:193px;width:262px;height:2px;background:#383838;"></div>
<div class="a" style="left:1338px;top:195px;width:262px;height:423px;background:#535353;"></div>
<div class="a" style="left:1338px;top:195px;width:262px;height:17px;background:#3a3a3a;border-bottom:1px solid #333;"></div>
<div class="a" style="left:1338px;top:195px;width:62px;height:18px;background:#535353;border-top:1px solid #676767;"></div>
<div class="a" style="left:1400px;top:196px;width:1px;height:16px;background:#2e2e2e;"></div>
<div class="t b" style="left:1345px;top:197px;transform:scaleX(.95);">Properties</div>
<svg style="left:1580px;top:199px;" width="16" height="9"><path d="M0 2h6l-3 3.500z" fill="#d8d8d8"/><path d="M7 1h8M7 3.500h8M7 6h8" stroke="#d8d8d8" stroke-width="1.300"/></svg>
<div class="t b" style="left:1347px;top:223px;color:#f4f4f4;">No Properties</div>
<div class="a" style="left:1338px;top:245px;width:262px;height:2px;background:#3a3a3a;border-bottom:1px solid #666;"></div>
<div class="a" style="left:1584px;top:247px;width:14px;height:351px;background:linear-gradient(90deg,#343434 0,#3e3e3e 30%,#494949 100%);"></div>
<div class="a" style="left:1338px;top:598px;width:262px;height:1px;background:#444;"></div>
<svg style="left:1559px;top:601px;" width="12" height="13"><path d="M1 3h10M4 3v-1.500h4v1.500M2 4.500h8l-.7 8h-6.600z" fill="none" stroke="#808080" stroke-width="1.200"/><path d="M4.500 6v5M6 6v5M7.500 6v5" stroke="#808080" stroke-width=".8"/></svg>
<div class="a" style="left:1591px;top:608px;width:7px;height:8px;background:repeating-linear-gradient(90deg,#6e6e6e 0 1px,transparent 1px 2px);-webkit-mask:repeating-linear-gradient(#000 0 1px,transparent 1px 2px);mask:repeating-linear-gradient(#000 0 1px,transparent 1px 2px);"></div>
<!-- LAYERS -->
<div class="a" style="left:1338px;top:616px;width:262px;height:3px;background:#383838;"></div>
<div class="a" style="left:1338px;top:619px;width:262px;height:541px;background:#535353;"></div>
<div class="a" style="left:1338px;top:619px;width:262px;height:17px;background:#3a3a3a;border-bottom:1px solid #333;"></div>
<div class="a" style="left:1338px;top:619px;width:43px;height:18px;background:#535353;border-top:1px solid #676767;"></div>
<div class="a" style="left:1381px;top:620px;width:1px;height:16px;background:#2e2e2e;"></div>
<div class="a" style="left:1382px;top:620px;width:55px;height:16px;background:#434343;border-top:1px solid #505050;"></div>
<div class="a" style="left:1437px;top:620px;width:1px;height:16px;background:#2e2e2e;"></div>
<div class="a" style="left:1438px;top:620px;width:40px;height:16px;background:#434343;border-top:1px solid #505050;"></div>
<div class="a" style="left:1478px;top:620px;width:1px;height:16px;background:#2e2e2e;"></div>
<div class="t b" style="left:1345px;top:621px;transform:scaleX(0.880);">Layers</div>
<div class="t b" style="left:1388px;top:621px;color:#8e8e8e;text-shadow:0 1px 0 rgba(0,0,0,.4);transform:scaleX(0.913);">Channels</div>
<div class="t b" style="left:1445px;top:621px;color:#8e8e8e;text-shadow:0 1px 0 rgba(0,0,0,.4);transform:scaleX(0.891);">Paths</div>
<svg style="left:1580px;top:623px;" width="16" height="9"><path d="M0 2h6l-3 3.500z" fill="#d8d8d8"/><path d="M7 1h8M7 3.500h8M7 6h8" stroke="#d8d8d8" stroke-width="1.300"/></svg>
<div class="a dd2" style="left:1343px;top:640px;width:68px;height:19px;"></div>
<svg style="left:1347px;top:644px;" width="12" height="12"><circle cx="7" cy="4.500" r="3.200" fill="none" stroke="#cfcfcf" stroke-width="1.600"/><path d="M4.500 7l-3.500 3.500" stroke="#cfcfcf" stroke-width="2"/></svg>
<div class="t" style="left:1363px;top:643px;color:#8a8a8a;text-shadow:none;">Kind</div>
<svg style="left:1400px;top:644px;" width="8" height="11"><path d="M1 4l3-3.500 3 3.500zM1 7l3 3.500 3-3.500z" fill="#9a9a9a"/></svg>
<svg style="left:1423px;top:643px;" width="15" height="13"><rect x=".5" y=".5" width="14" height="12" fill="#444" stroke="#cfcfcf"/><path d="M2.500 10.500l3-4 2.500 2.500 2-1.500 2.500 3z" fill="#cfcfcf"/><circle cx="10.500" cy="4" r="1.200" fill="#cfcfcf"/></svg>
<svg style="left:1448px;top:643px;" width="12" height="12"><circle cx="6" cy="6" r="5.500" fill="#cfcfcf"/><path d="M3 9a4.500 4.500 0 0 0 6-6z" fill="#4a4a4a"/></svg>
<div class="t w" style="left:1472px;top:641px;font-family:'Liberation Serif',serif;font-weight:bold;font-size:16px;line-height:16px;color:#cfcfcf;text-shadow:none;">T</div>
<svg style="left:1496px;top:643px;" width="13" height="13"><rect x="2.500" y="2.500" width="8" height="8" fill="none" stroke="#cfcfcf" stroke-width="1.200"/><g fill="#535353" stroke="#cfcfcf" stroke-width=".9"><rect x=".5" y=".5" width="3" height="3"/><rect x="9.500" y=".5" width="3" height="3"/><rect x=".5" y="9.500" width="3" height="3"/><rect x="9.500" y="9.500" width="3" height="3"/></g></svg>
<svg style="left:1520px;top:643px;" width="13" height="13"><path d="M4.500 .5h5l3 3v8.500h-8z" fill="#5c5c5c" stroke="#cfcfcf"/><rect x=".5" y="6.500" width="6" height="6" fill="#cfcfcf"/></svg>
<div class="a" style="left:1546px;top:642px;width:10px;height:8px;background:linear-gradient(#8a8a8a,#6a6a6a);border-radius:1px 1px 0 0;"></div>
<div class="a" style="left:1546px;top:650px;width:10px;height:8px;background:#3a3a3a;border-radius:0 0 1px 1px;"></div>
<div class="a sep" style="left:1338px;top:662px;width:260px;"></div>
<div class="a dd2" style="left:1343px;top:669px;width:109px;height:18px;"></div>
<div class="t" style="left:1350px;top:671px;color:#9a9a9a;text-shadow:none;">Normal</div>
<svg style="left:1441px;top:673px;" width="8" height="11"><path d="M1 4l3-3.500 3 3.500zM1 7l3 3.500 3-3.500z" fill="#9a9a9a"/></svg>
<div class="t" style="left:1460px;top:670px;">Opacity:</div>
<div class="a tf" style="left:1502px;top:669px;width:36px;height:18px;"></div>
<div class="t" style="left:1507px;top:671px;color:#686868;text-shadow:none;">100%</div>
<div class="a" style="left:1537px;top:669px;width:19px;height:18px;background:linear-gradient(#767676,#606060);border:1px solid #3c3c3c;border-radius:0 2px 2px 0;"></div>
<svg style="left:1543px;top:676px;" width="8" height="5"><path d="M0 0h7l-3.500 4z" fill="#f0f0f0"/></svg>
<div class="a sep" style="left:1338px;top:690px;width:260px;"></div>
<div class="t" style="left:1344px;top:700px;">Lock:</div>
<svg style="left:1377px;top:701px;" width="11" height="11"><rect width="11" height="11" fill="#cfcfcf"/><g fill="#6a6a6a"><rect x="0" y="0" width="3.700" height="3.700"/><rect x="7.300" y="0" width="3.700" height="3.700"/><rect x="3.700" y="3.700" width="3.600" height="3.600"/><rect x="0" y="7.300" width="3.700" height="3.700"/><rect x="7.300" y="7.300" width="3.700" height="3.700"/></g></svg>
<svg style="left:1398px;top:698px;" width="16" height="14"><path d="M15 1l-7 8" stroke="#cfcfcf" stroke-width="1.800" stroke-linecap="round"/><path d="M7 8l2 2c-1.500 2.800-4.500 3.800-8 3 2-.8 3-3.500 6-5z" fill="#cfcfcf"/></svg>
<svg style="left:1420px;top:699px;" width="14" height="14"><path d="M7 1.500v11M1.500 7h11" stroke="#cfcfcf" stroke-width="1.200"/><path d="M7 0l2.200 2.800h-4.400zM7 14l2.200-2.800h-4.400zM0 7l2.800-2.200v4.400zM14 7l-2.800-2.200v4.400z" fill="#cfcfcf"/></svg>
<svg style="left:1443px;top:699px;" width="12" height="14"><path d="M3 6v-2a3 3 0 0 1 6 0v2" fill="none" stroke="#cfcfcf" stroke-width="1.500"/><rect x="1" y="6" width="10" height="7.500" fill="#cfcfcf"/><rect x="5.300" y="8" width="1.400" height="3" fill="#444"/></svg>
<div class="t" style="left:1482px;top:698px;">Fill:</div>
<div class="a tf" style="left:1502px;top:697px;width:36px;height:18px;"></div>
<div class="t" style="left:1507px;top:699px;color:#686868;text-shadow:none;">100%</div>
<div class="a" style="left:1537px;top:697px;width:19px;height:18px;background:linear-gradient(#767676,#606060);border:1px solid #3c3c3c;border-radius:0 2px 2px 0;"></div>
<svg style="left:1543px;top:704px;" width="8" height="5"><path d="M0 0h7l-3.500 4z" fill="#f0f0f0"/></svg>
<div class="a" style="left:1338px;top:721px;width:260px;height:1px;background:#3c3c3c;"></div>
<div class="a" style="left:1338px;top:722px;width:246px;height:419px;background:#474747;"></div>
<div class="a" style="left:1584px;top:722px;width:14px;height:419px;background:linear-gradient(90deg,#343434 0,#3e3e3e 30%,#484848 100%);"></div>
<div class="a" style="left:1338px;top:722px;width:246px;height:38px;background:#535353;"></div>
<div class="a" style="left:1369px;top:722px;width:215px;height:38px;background:#596679;"></div>
<div class="a" style="left:1338px;top:760px;width:246px;height:1px;background:#3e3e3e;"></div>
<div class="a" style="left:1368px;top:722px;width:1px;height:39px;background:#434343;"></div>
<svg style="left:1346px;top:736px;" width="13" height="9" viewBox="0 0 14 10"><path d="M.5 5c2-3.300 4.300-4.500 6.500-4.500s4.500 1.200 6.500 4.500c-2 3-4.300 4.300-6.500 4.300s-4.500-1.300-6.500-4.300z" fill="#cdcdcd"/><circle cx="7" cy="4.800" r="2.900" fill="#4a4a4a"/><circle cx="7" cy="4.800" r="1.300" fill="#cdcdcd"/></svg>
<svg style="left:1370px;top:723px;" width="36" height="36"><path d="M.5 12v-11.500h11.500M24 .5h11.500v11.500M35.500 24v11.500h-11.500M12 35.500h-11.500v-11.500" fill="none" stroke="#fff" stroke-width="1"/></svg>
<div class="a" style="left:1372px;top:725px;width:32px;height:32px;background:#473559;border:1px solid #17102a;box-shadow:inset 0 0 0 1px rgba(23,16,42,.55);"></div>
<div class="t" style="left:1414px;top:736px;">Layer 3</div>
<div class="a" style="left:1338px;top:761px;width:246px;height:38px;background:#535353;"></div>
<div class="a" style="left:1338px;top:799px;width:246px;height:1px;background:#3e3e3e;"></div>
<div class="a" style="left:1368px;top:761px;width:1px;height:39px;background:#434343;"></div>
<svg style="left:1346px;top:775px;" width="13" height="9" viewBox="0 0 14 10"><path d="M.5 5c2-3.300 4.300-4.500 6.500-4.500s4.500 1.200 6.500 4.500c-2 3-4.300 4.300-6.500 4.300s-4.500-1.300-6.500-4.300z" fill="#cdcdcd"/><circle cx="7" cy="4.800" r="2.900" fill="#4a4a4a"/><circle cx="7" cy="4.800" r="1.300" fill="#cdcdcd"/></svg>
<div class="a" style="left:1372px;top:764px;width:32px;height:32px;background:#c795fb;border:1px solid #2a2a2a;"></div>
<div class="t" style="left:1414px;top:775px;">Layer 2</div>
<div class="a" style="left:1338px;top:800px;width:246px;height:38px;background:#535353;"></div>
<div class="a" style="left:1338px;top:838px;width:246px;height:1px;background:#3e3e3e;"></div>
<div class="a" style="left:1368px;top:800px;width:1px;height:39px;background:#434343;"></div>
<svg style="left:1346px;top:814px;" width="13" height="9" viewBox="0 0 14 10"><path d="M.5 5c2-3.300 4.300-4.500 6.500-4.500s4.500 1.200 6.500 4.500c-2 3-4.300 4.300-6.500 4.300s-4.500-1.300-6.500-4.300z" fill="#cdcdcd"/><circle cx="7" cy="4.800" r="2.900" fill="#4a4a4a"/><circle cx="7" cy="4.800" r="1.300" fill="#cdcdcd"/></svg>
<div class="a" style="left:1372px;top:803px;width:32px;height:32px;background:#000;border:1px solid #2a2a2a;"></div>
<div class="t" style="left:1414px;top:814px;">Layer 1</div>
<div class="a" style="left:1338px;top:839px;width:246px;height:38px;background:#535353;"></div>
<div class="a" style="left:1338px;top:877px;width:246px;height:1px;background:#3e3e3e;"></div>
<div class="a" style="left:1368px;top:839px;width:1px;height:39px;background:#434343;"></div>
<svg style="left:1346px;top:853px;" width="13" height="9" viewBox="0 0 14 10"><path d="M.5 5c2-3.300 4.300-4.500 6.500-4.500s4.500 1.200 6.500 4.500c-2 3-4.300 4.300-6.500 4.300s-4.500-1.300-6.500-4.300z" fill="#cdcdcd"/><circle cx="7" cy="4.800" r="2.900" fill="#4a4a4a"/><circle cx="7" cy="4.800" r="1.300" fill="#cdcdcd"/></svg>
<div class="a" style="left:1372px;top:842px;width:32px;height:32px;background:#fff;border:1px solid #2a2a2a;"></div>
<div class="t" style="left:1414px;top:853px;font-style:italic;">Background</div>
<svg style="left:1557px;top:852px;" width="11" height="13"><path d="M3 6v-2a2.500 2.500 0 0 1 5 0v2" fill="none" stroke="#c4c4c4" stroke-width="1.200"/><rect x="1.500" y="6" width="8" height="6" fill="none" stroke="#c4c4c4" stroke-width="1.200"/><rect x="5" y="8" width="1.200" height="2.500" fill="#c4c4c4"/></svg>
<div class="a" style="left:1338px;top:1141px;width:262px;height:19px;background:#535353;border-top:1px solid #626262;"></div>
<svg style="left:1396px;top:1147px;" width="14" height="8"><rect x="1" y="1" width="12" height="5" rx="2.500" fill="none" stroke="#8c8c8c" stroke-width="1.500"/><path d="M4 3.500h6" stroke="#8c8c8c" stroke-width="1.500"/></svg>
<div class="t w" style="left:1424px;top:1142px;font-family:'Liberation Serif',serif;font-style:italic;font-size:15px;line-height:16px;color:#b8b8b8;text-shadow:none;">fx</div>
<svg style="left:1438px;top:1154px;" width="4" height="3"><path d="M0 0h4l-2 2.500z" fill="#d8d8d8"/></svg>
<svg style="left:1451px;top:1146px;" width="14" height="11"><rect width="14" height="11" fill="#b8b8b8"/><circle cx="7" cy="5.500" r="2.800" fill="#4a4a4a"/></svg>
<svg style="left:1478px;top:1145px;" width="13" height="13"><circle cx="6.500" cy="6.500" r="5.800" fill="#b8b8b8"/><path d="M3 10a5 5 0 0 0 7-7z" fill="#4a4a4a"/></svg>
<svg style="left:1493px;top:1154px;" width="4" height="3"><path d="M0 0h4l-2 2.500z" fill="#d8d8d8"/></svg>
<svg style="left:1505px;top:1145px;" width="13" height="11"><path d="M0 0h5l1.500 2h6.500v9h-13z" fill="#b8b8b8"/></svg>
<svg style="left:1532px;top:1146px;" width="12" height="12"><path d="M2 0h9.500v11.500h-6l-3.500-3.500z" fill="#b8b8b8"/><path d="M0 7h5v5" fill="none" stroke="#535353" stroke-width="1.500"/></svg>
<svg style="left:1559px;top:1144px;" width="12" height="14"><path d="M0 3h12M4 3v-1.500h4v1.500" fill="none" stroke="#b8b8b8" stroke-width="1.400"/><path d="M1.500 4.500h9l-.8 9h-7.400z" fill="#b8b8b8"/><path d="M4.200 6v6M6 6v6M7.800 6v6" stroke="#535353" stroke-width=".8"/></svg>
<div class="a" style="left:1598px;top:75px;width:2px;height:1085px;background:linear-gradient(90deg,#4a4a4a,#2c2c2c);"></div>
<!-- DIALOG -->
<div class="a" style="left:110px;top:226px;width:567px;height:353px;background:#1c1c24;border-radius:6px 6px 1px 1px;box-shadow:0 1px 4px rgba(0,0,0,.3);"></div>
<div class="a" style="left:111px;top:227px;width:565px;height:351px;background:#e7edf8;border-radius:5px 5px 0 0;border:1px solid #fafcff;border-right-color:#a8e4f0;border-bottom-color:#8adcee;"></div>
<div class="a" style="left:112px;top:228px;width:563px;height:23px;background:linear-gradient(#a2bdde 0%,#b2c9e5 40%,#c0d5ec 75%,#cfe0f2 100%);border-radius:4px 4px 0 0;border-top:1px solid #e8f2fb;"></div>
<div class="a" style="left:112px;top:576px;width:563px;height:2px;background:#8adcee;"></div>
<div class="a" style="left:674px;top:240px;width:2px;height:338px;background:#a8e4f0;"></div>
<div class="a" style="left:119px;top:252px;width:550px;height:324px;background:#eeeeee;"></div>
<div class="d" style="left:118px;top:233px;color:#0a1226;letter-spacing:-0.1px;">Color Picker (Foreground Color)</div>
<div class="a" style="left:641px;top:231px;width:31px;height:17px;border-radius:3px;border:1px solid #4a1a16;background:linear-gradient(#f0baae 0%,#e39280 45%,#cf4a32 52%,#dc775f 100%);box-shadow:inset 0 0 0 1px rgba(255,255,255,.35);"></div>
<svg style="left:651px;top:235px;" width="12" height="10"><path d="M2 1.500l8 7M10 1.500l-8 7" stroke="#5a2a22" stroke-width="4" fill="none" opacity=".55"/><path d="M2 1.500l8 7M10 1.500l-8 7" stroke="#fff" stroke-width="2.400" fill="none"/></svg>
<div class="a" style="left:123px;top:281px;width:260px;height:260px;border:2px solid #fff;border-top-color:#a4a0a8;border-left-color:#a4a0a8;background:#fff;"></div>
<div class="a" style="left:125px;top:283px;width:256px;height:256px;background:linear-gradient(90deg,#fff,#8000ff);"></div>
<div class="a" style="left:125px;top:283px;width:256px;height:256px;background:linear-gradient(rgba(0,0,0,0),#000);"></div>
<svg style="left:222px;top:443px;" width="13" height="13"><circle cx="6.500" cy="6.500" r="5.200" fill="none" stroke="#fff" stroke-width="1.200"/></svg>
<div class="a" style="left:393px;top:281px;width:23px;height:260px;border:2px solid #fff;border-top-color:#b8a8b0;border-left-color:#e0b0b8;background:linear-gradient(#f00 0%,#f0f 16.600%,#00f 33.300%,#0ff 50%,#0f0 66.600%,#ff0 83.300%,#f00 100%);background-origin:content-box;background-clip:content-box;"></div>
<svg style="left:384px;top:342px;" width="8" height="11"><path d="M.5 .5h3l4 5-4 5h-3z" fill="#fff" stroke="#555" stroke-width=".9"/></svg>
<svg style="left:416px;top:342px;" width="8" height="11"><path d="M7.500 .5h-3l-4 5 4 5h3z" fill="#fff" stroke="#555" stroke-width=".9"/></svg>
<div class="d" style="left:445px;top:269px;">new</div>
<div class="a" style="left:428px;top:286px;width:60px;height:68px;background:#473559;border:1px solid #2a2233;"></div>
<div class="d" style="left:437px;top:357px;">current</div>
<svg style="left:498px;top:324px;" width="12" height="12"><path d="M6 .5l5 2.500v6l-5 2.500-5-2.500v-6z" fill="#c8c8c8" stroke="#444" stroke-width=".9"/><path d="M1 3l5 2.500 5-2.500M6 5.500v6" fill="none" stroke="#444" stroke-width=".9"/><path d="M6 .8l4.600 2.300-4.600 2.300-4.600-2.300z" fill="#f2f2f2"/></svg>
<div class="a" style="left:498px;top:340px;width:12px;height:12px;background:#2a2a6c;border:1px solid #fff;outline:1px solid #555;outline-offset:0;"></div>
<div class="a" style="left:538px;top:262px;width:125px;height:18px;border-radius:3px;border:1px solid #2c8cb8;background:linear-gradient(#e6f5fd 0%,#d5effc 48%,#b6e3f9 52%,#a4daf5 100%);box-shadow:inset 0 0 0 1px #48d0f2;"></div>
<div class="d" style="left:538px;top:265px;width:125px;text-align:center;">OK</div>
<div class="a" style="left:538px;top:290px;width:125px;height:18px;border-radius:3px;border:1px solid #707070;background:linear-gradient(#f4f4f4 0%,#ebebeb 48%,#dddddd 52%,#cfcfcf 100%);box-shadow:inset 0 0 0 1px #fbfbfb;"></div>
<div class="d" style="left:538px;top:293px;width:125px;text-align:center;">Cancel</div>
<div class="a" style="left:538px;top:325px;width:125px;height:18px;border-radius:3px;border:1px solid #707070;background:linear-gradient(#f4f4f4 0%,#ebebeb 48%,#dddddd 52%,#cfcfcf 100%);box-shadow:inset 0 0 0 1px #fbfbfb;"></div>
<div class="d" style="left:538px;top:328px;width:125px;text-align:center;">Add to Swatches</div>
<div class="a" style="left:538px;top:360px;width:125px;height:18px;border-radius:3px;border:1px solid #707070;background:linear-gradient(#f4f4f4 0%,#ebebeb 48%,#dddddd 52%,#cfcfcf 100%);box-shadow:inset 0 0 0 1px #fbfbfb;"></div>
<div class="d" style="left:538px;top:363px;width:125px;text-align:center;">Color Libraries</div>
<div class="a" style="left:427px;top:398px;width:12px;height:12px;border-radius:50%;border:1px solid #8a8f94;background:radial-gradient(circle at 40% 35%,#fdfdfd,#d4d8da);"></div>
<div class="a" style="left:427px;top:398px;width:12px;height:12px;border-radius:50%;border:1px solid #5a8aa8;background:#d8eef8;"></div>
<div class="a" style="left:430px;top:401px;width:6px;height:6px;border-radius:50%;background:radial-gradient(circle at 40% 35%,#5cc0e0,#0c4a6a);"></div>
<div class="d" style="left:443px;top:398px;">H:</div>
<div class="a" style="left:467px;top:394px;width:45px;height:19px;background:#fff;border:1px solid #e2e6ec;border-top-color:#a8abb2;"></div>
<div class="d" style="left:474px;top:398px;">270</div>
<div class="d" style="left:516px;top:398px;">°</div>
<div class="a" style="left:427px;top:422px;width:12px;height:12px;border-radius:50%;border:1px solid #8a8f94;background:radial-gradient(circle at 40% 35%,#fdfdfd,#d4d8da);"></div>
<div class="d" style="left:443px;top:422px;">S:</div>
<div class="a" style="left:467px;top:418px;width:45px;height:19px;background:#fff;border:1px solid #e2e6ec;border-top-color:#a8abb2;"></div>
<div class="d" style="left:474px;top:422px;">40</div>
<div class="d" style="left:516px;top:422px;">%</div>
<div class="a" style="left:427px;top:446px;width:12px;height:12px;border-radius:50%;border:1px solid #8a8f94;background:radial-gradient(circle at 40% 35%,#fdfdfd,#d4d8da);"></div>
<div class="d" style="left:443px;top:446px;">B:</div>
<div class="a" style="left:467px;top:442px;width:45px;height:19px;background:#fff;border:1px solid #e2e6ec;border-top-color:#a8abb2;"></div>
<div class="d" style="left:474px;top:446px;">35</div>
<div class="d" style="left:516px;top:446px;">%</div>
<div class="a" style="left:427px;top:474px;width:12px;height:12px;border-radius:50%;border:1px solid #8a8f94;background:radial-gradient(circle at 40% 35%,#fdfdfd,#d4d8da);"></div>
<div class="d" style="left:443px;top:474px;">R:</div>
<div class="a" style="left:467px;top:470px;width:45px;height:19px;background:#fff;border:1px solid #e2e6ec;border-top-color:#a8abb2;"></div>
<div class="a" style="left:473px;top:473px;width:15px;height:14px;background:#3b8fe8;"></div>
<div class="d" style="left:474px;top:474px;color:#fff;">71</div>
<div class="a" style="left:427px;top:498px;width:12px;height:12px;border-radius:50%;border:1px solid #8a8f94;background:radial-gradient(circle at 40% 35%,#fdfdfd,#d4d8da);"></div>
<div class="d" style="left:443px;top:498px;">G:</div>
<div class="a" style="left:467px;top:494px;width:45px;height:19px;background:#fff;border:1px solid #e2e6ec;border-top-color:#a8abb2;"></div>
<div class="d" style="left:474px;top:498px;">53</div>
<div class="a" style="left:427px;top:522px;width:12px;height:12px;border-radius:50%;border:1px solid #8a8f94;background:radial-gradient(circle at 40% 35%,#fdfdfd,#d4d8da);"></div>
<div class="d" style="left:443px;top:522px;">B:</div>
<div class="a" style="left:467px;top:518px;width:45px;height:19px;background:#fff;border:1px solid #e2e6ec;border-top-color:#a8abb2;"></div>
<div class="d" style="left:474px;top:522px;">89</div>
<div class="a" style="left:563px;top:398px;width:12px;height:12px;border-radius:50%;border:1px solid #8a8f94;background:radial-gradient(circle at 40% 35%,#fdfdfd,#d4d8da);"></div>
<div class="d" style="left:579px;top:398px;">L:</div>
<div class="a" style="left:602px;top:394px;width:56px;height:19px;background:#fff;border:1px solid #e2e6ec;border-top-color:#a8abb2;"></div>
<div class="d" style="left:609px;top:398px;">25</div>
<div class="a" style="left:563px;top:422px;width:12px;height:12px;border-radius:50%;border:1px solid #8a8f94;background:radial-gradient(circle at 40% 35%,#fdfdfd,#d4d8da);"></div>
<div class="d" style="left:579px;top:422px;">a:</div>
<div class="a" style="left:602px;top:418px;width:56px;height:19px;background:#fff;border:1px solid #e2e6ec;border-top-color:#a8abb2;"></div>
<div class="d" style="left:609px;top:422px;">14</div>
<div class="a" style="left:563px;top:446px;width:12px;height:12px;border-radius:50%;border:1px solid #8a8f94;background:radial-gradient(circle at 40% 35%,#fdfdfd,#d4d8da);"></div>
<div class="d" style="left:579px;top:446px;">b:</div>
<div class="a" style="left:602px;top:442px;width:56px;height:19px;background:#fff;border:1px solid #e2e6ec;border-top-color:#a8abb2;"></div>
<div class="d" style="left:609px;top:446px;">-19</div>
<div class="d" style="left:560px;width:38px;text-align:right;top:474px;">C:</div>
<div class="a" style="left:602px;top:470px;width:45px;height:19px;background:#fff;border:1px solid #e2e6ec;border-top-color:#a8abb2;"></div>
<div class="d" style="left:609px;top:474px;">77</div>
<div class="d" style="left:651px;top:474px;">%</div>
<div class="d" style="left:560px;width:38px;text-align:right;top:498px;">M:</div>
<div class="a" style="left:602px;top:494px;width:45px;height:19px;background:#fff;border:1px solid #e2e6ec;border-top-color:#a8abb2;"></div>
<div class="d" style="left:609px;top:498px;">84</div>
<div class="d" style="left:651px;top:498px;">%</div>
<div class="d" style="left:560px;width:38px;text-align:right;top:522px;">Y:</div>
<div class="a" style="left:602px;top:518px;width:45px;height:19px;background:#fff;border:1px solid #e2e6ec;border-top-color:#a8abb2;"></div>
<div class="d" style="left:609px;top:522px;">38</div>
<div class="d" style="left:651px;top:522px;">%</div>
<div class="d" style="left:560px;width:38px;text-align:right;top:546px;">K:</div>
<div class="a" style="left:602px;top:542px;width:45px;height:19px;background:#fff;border:1px solid #e2e6ec;border-top-color:#a8abb2;"></div>
<div class="d" style="left:609px;top:546px;">30</div>
<div class="d" style="left:651px;top:546px;">%</div>
<div class="d" style="left:431px;top:550px;">#</div>
<div class="a" style="left:444px;top:547px;width:110px;height:19px;background:#fff;border:1px solid #e2e6ec;border-top-color:#a8abb2;"></div>
<div class="d" style="left:451px;top:551px;">473559</div>
<div class="a" style="left:123px;top:549px;width:13px;height:13px;border:1px solid #8e8f8f;background:#f4f4f4;"></div>
<div class="a" style="left:125px;top:551px;width:9px;height:9px;background:linear-gradient(135deg,#cfd3d6,#f6f6f6);"></div>
<div class="d" style="left:139px;top:549px;">Only Web Colors</div>
</body>
</html>
